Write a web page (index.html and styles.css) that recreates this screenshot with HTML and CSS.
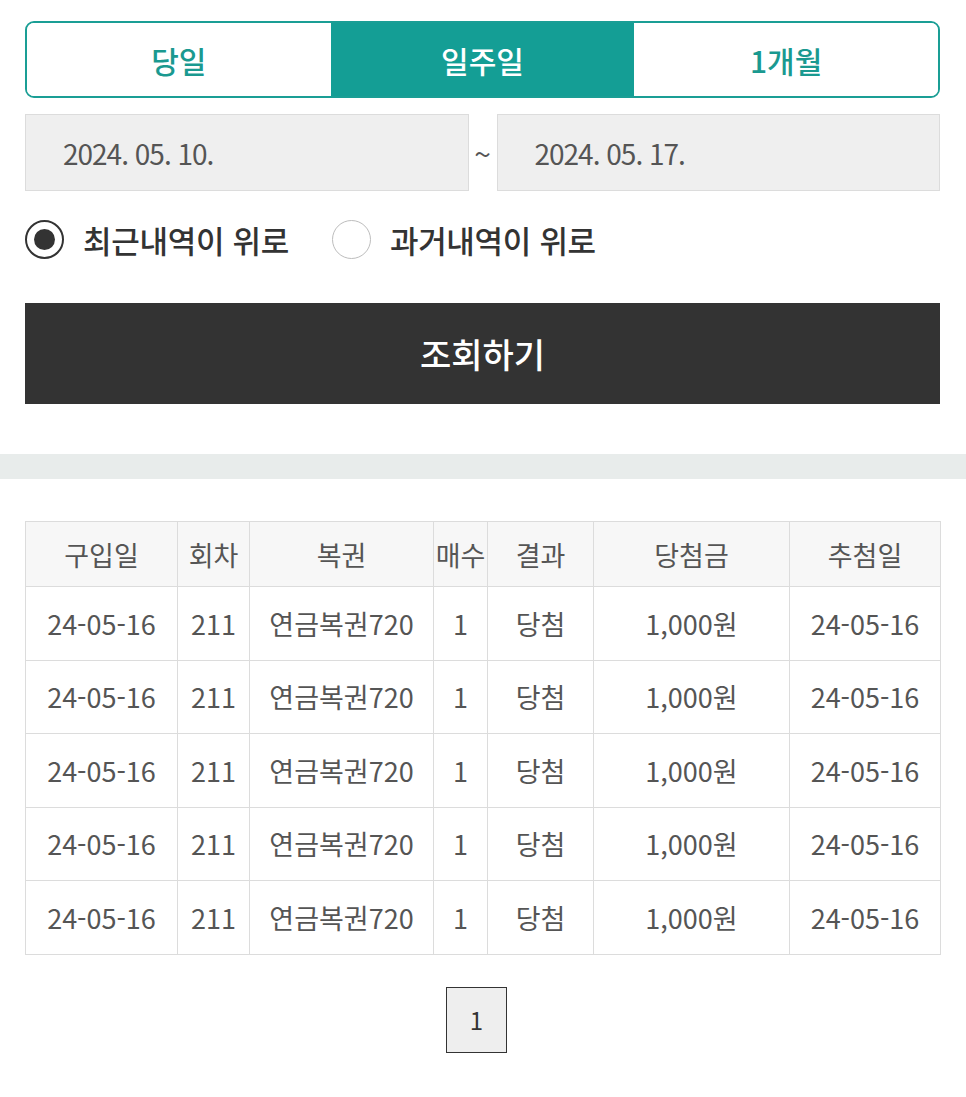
FILE: index.html
```html
<!DOCTYPE html>
<html lang="ko">
<head>
<meta charset="utf-8">
<link rel="stylesheet" href="styles.css">
</head>
<body>
<div class="wrap">
  <div class="tabs">
    <div class="tab">당일</div>
    <div class="tab active">일주일</div>
    <div class="tab">1개월</div>
  </div>
  <div class="dates">
    <div class="date">2024. 05. 10.</div>
    <div class="tilde">~</div>
    <div class="date">2024. 05. 17.</div>
  </div>
  <div class="radios">
    <label class="radio"><span class="circle checked"></span><span class="rlabel">최근내역이 위로</span></label>
    <label class="radio"><span class="circle"></span><span class="rlabel">과거내역이 위로</span></label>
  </div>
  <div class="search">조회하기</div>
</div>
<div class="band"></div>
<div class="wrap">
  <table class="list">
    <colgroup>
      <col class="c1"><col class="c2"><col class="c3"><col class="c4"><col class="c5"><col class="c6"><col class="c7">
    </colgroup>
    <thead>
      <tr><th>구입일</th><th>회차</th><th>복권</th><th>매수</th><th>결과</th><th>당첨금</th><th>추첨일</th></tr>
    </thead>
    <tbody>
      <tr><td>24-05-16</td><td>211</td><td>연금복권720</td><td>1</td><td>당첨</td><td>1,000원</td><td>24-05-16</td></tr>
      <tr><td>24-05-16</td><td>211</td><td>연금복권720</td><td>1</td><td>당첨</td><td>1,000원</td><td>24-05-16</td></tr>
      <tr><td>24-05-16</td><td>211</td><td>연금복권720</td><td>1</td><td>당첨</td><td>1,000원</td><td>24-05-16</td></tr>
      <tr><td>24-05-16</td><td>211</td><td>연금복권720</td><td>1</td><td>당첨</td><td>1,000원</td><td>24-05-16</td></tr>
      <tr><td>24-05-16</td><td>211</td><td>연금복권720</td><td>1</td><td>당첨</td><td>1,000원</td><td>24-05-16</td></tr>
    </tbody>
  </table>
  <div class="pager"><span class="page">1</span></div>
</div>
</body>
</html>
```
FILE: styles.css
```css
* { box-sizing: border-box; }
html, body { margin: 0; padding: 0; background: #fff; }
body { font-family: "Noto Sans CJK KR", "Noto Sans", sans-serif; color: #333; }
.wrap { padding: 0 26px 0 25px; }

.tabs {
  margin-top: 21px;
  display: flex;
  height: 77px;
  border: 2px solid #1a9e95;
  border-radius: 9px;
  overflow: hidden;
}
.tab {
  flex: 1;
  display: flex;
  align-items: center;
  justify-content: center;
  font-size: 30px;
  font-weight: 500;
  color: #1a9990;
  background: #fff;
}
.tab.active { background: #149e95; color: #fff; }

.dates {
  margin-top: 16px;
  display: flex;
  height: 77px;
}
.date {
  flex: 1;
  background: #efefef;
  border: 1px solid #dcdcdc;
  display: flex;
  align-items: center;
  padding-left: 37px;
  font-size: 28px;
  letter-spacing: -1px;
  color: #555;
}
.tilde {
  width: 28px;
  display: flex;
  align-items: center;
  justify-content: center;
  font-size: 30px;
  color: #555;
}

.radios {
  display: flex;
  align-items: center;
  margin-top: 28px;
  height: 40px;
}
.radio { display: flex; align-items: center; margin-right: 43px; }
.circle {
  width: 39px; height: 39px;
  border-radius: 50%;
  border: 1.5px solid #bdbdbd;
  background: #fff;
  position: relative;
  flex: none;
}
.circle.checked { border: 2px solid #333; }
.circle.checked::after {
  content: "";
  position: absolute;
  left: 50%; top: 50%;
  width: 21px; height: 21px;
  margin: -10.5px 0 0 -10.5px;
  border-radius: 50%;
  background: #333;
}
.rlabel {
  margin-left: 19px;
  font-size: 31px;
  font-weight: 500;
  color: #333;
  letter-spacing: -0.3px;
}

.search {
  margin-top: 44px;
  height: 101px;
  background: #333;
  color: #fff;
  font-size: 34px;
  font-weight: 500;
  display: flex;
  align-items: center;
  justify-content: center;
}

.band {
  margin-top: 50px;
  height: 25px;
  background: #e8eceb;
}

.list {
  margin-top: 42px;
  width: 100%;
  border-collapse: collapse;
  table-layout: fixed;
  font-size: 27px;
  color: #555;
}
.c1 { width: 152px; }
.c2 { width: 72px; }
.c3 { width: 184px; }
.c4 { width: 54px; }
.c5 { width: 106px; }
.c6 { width: 196px; }
.c7 { width: 151px; }
.list th, .list td {
  border: 1px solid #dcdcdc;
  text-align: center;
  padding: 0;
  white-space: nowrap;
  overflow: hidden;
}
.list th {
  height: 65px;
  background: #f7f7f7;
  font-weight: 400;
  color: #555;
}
.list td { height: 73.5px; }

.pager {
  display: flex;
  justify-content: center;
  margin-top: 32px;
  padding-right: 12px;
}
.page {
  width: 61px;
  height: 66px;
  border: 1.5px solid #333;
  background: #eee;
  display: flex;
  align-items: center;
  justify-content: center;
  font-size: 24px;
  color: #333;
}
```
